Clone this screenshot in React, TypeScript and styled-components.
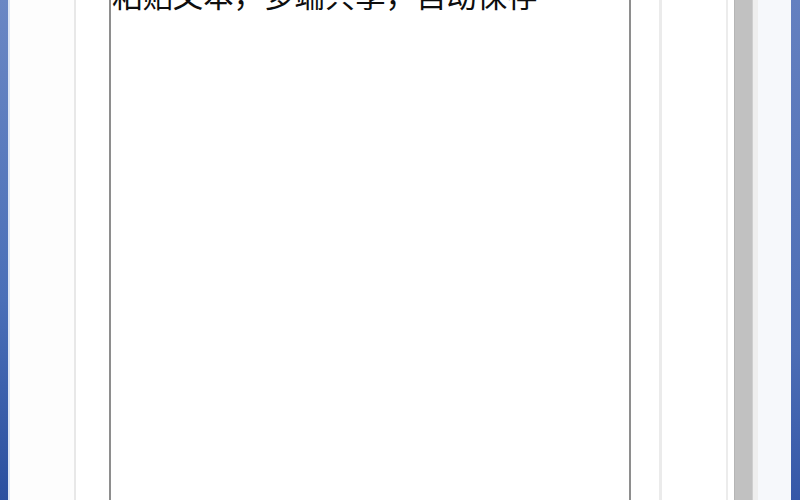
import React from "react";
import styled, { createGlobalStyle } from "styled-components";

const Global = createGlobalStyle`
  html, body {
    margin: 0;
    padding: 0;
    background: #fff;
  }
  #root {
    height: 500px;
  }
`;

const Window = styled.div`
  display: flex;
  width: 800px;
  height: 500px;
  overflow: hidden;
`;

type SideProps = { side: "left" | "right" };

const FrameBlue = styled.div<SideProps>`
  width: ${({ side }) => (side === "left" ? "8px" : "10px")};
  flex-shrink: 0;
  background: ${({ side }) =>
    side === "left"
      ? "linear-gradient(#6a87c4, #4a6fb8 60%, #2a4f9f)"
      : "linear-gradient(#6480c0, #4c6db5 70%, #3558a8)"};
`;

const FrameEdge = styled.div`
  width: 2px;
  flex-shrink: 0;
  background: #dde6f4;
`;

const Gutter = styled.div<{ w: number; bg?: string }>`
  width: ${({ w }) => w}px;
  flex-shrink: 0;
  background: ${({ bg }) => bg || "#fdfdfd"};
`;

const Rule = styled.div<{ w?: number; color?: string }>`
  width: ${({ w }) => w || 2}px;
  flex-shrink: 0;
  background: ${({ color }) => color || "#e8e8e8"};
`;

const Editor = styled.div`
  width: 517px;
  flex-shrink: 0;
  background: #fff;
  border-left: 2px solid #8e8e8e;
  border-right: 2px solid #8e8e8e;
  overflow: hidden;
  padding-left: 1px;
`;

const Text = styled.div`
  margin-top: -21px;
  font-family: "Noto Sans CJK SC", "Noto Sans", sans-serif;
  font-size: 30.4px;
  line-height: 30px;
  color: #0e0e0e;
  white-space: nowrap;
`;

const Scrollbar = styled.div`
  width: 19px;
  flex-shrink: 0;
  background: #c1c1c1;
  border-left: 1px solid #b5b5b5;
  border-right: 1px solid #cfcfcf;
  box-sizing: border-box;
`;

export default function App() {
  return (
    <>
      <Global />
      <Window>
        <FrameBlue side="left" />
        <FrameEdge />
        <Gutter w={64} />
        <Rule />
        <Gutter w={33} bg="#fff" />
        <Editor>
          <Text>粘贴文本，多端共享，自动保存</Text>
        </Editor>
        <Gutter w={28} bg="#fff" />
        <Rule w={3} color="#ebebeb" />
        <Gutter w={64} bg="#fff" />
        <Rule color="#ececec" />
        <Gutter w={6} bg="#fff" />
        <Scrollbar />
        <Gutter w={5} bg="#eeeeee" />
        <Gutter w={33} bg="#f6f8fb" />
        <FrameBlue side="right" />
      </Window>
    </>
  );
}
